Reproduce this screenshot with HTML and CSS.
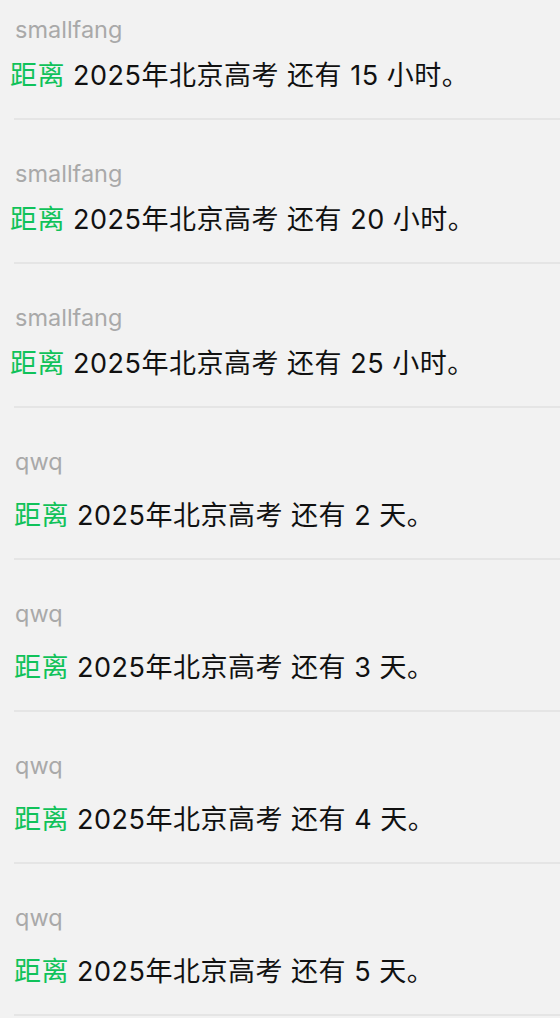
FILE: index.html
```html
<!DOCTYPE html>
<html lang="zh-CN">
<head>
    <meta charset="UTF-8">
    <meta name="viewport" content="width=device-width, initial-scale=1.0">
    <title>高考倒计时</title>
    <link rel="stylesheet" href="styles.css">
</head>
<body>
    <div class="feed">
        <div class="msg">
            <div class="user">smallfang</div>
            <div class="text"><span class="hl">距离</span> 2025年北京高考 还有 15 小时。</div>
        </div>
        <div class="msg">
            <div class="user">smallfang</div>
            <div class="text"><span class="hl">距离</span> 2025年北京高考 还有 20 小时。</div>
        </div>
        <div class="msg">
            <div class="user">smallfang</div>
            <div class="text"><span class="hl">距离</span> 2025年北京高考 还有 25 小时。</div>
        </div>
        <div class="msg msg-bot">
            <div class="user">qwq</div>
            <div class="text"><span class="hl">距离</span> 2025年北京高考 还有 2 天。</div>
        </div>
        <div class="msg msg-bot">
            <div class="user">qwq</div>
            <div class="text"><span class="hl">距离</span> 2025年北京高考 还有 3 天。</div>
        </div>
        <div class="msg msg-bot">
            <div class="user">qwq</div>
            <div class="text"><span class="hl">距离</span> 2025年北京高考 还有 4 天。</div>
        </div>
        <div class="msg msg-bot">
            <div class="user">qwq</div>
            <div class="text"><span class="hl">距离</span> 2025年北京高考 还有 5 天。</div>
        </div>
    </div>
</body>
</html>
```

FILE: styles.css
```css
:root {
    --bg-color: #f2f2f2;
    --line-color: #e5e5e5;
    --text-color: #111111;
    --muted-color: #a9a9a9;
    --accent-color: #10c25a;
}

body {
    margin: 0;
    background-color: var(--bg-color);
    font-family: Inter, "Noto Sans CJK SC", sans-serif;
    color: var(--text-color);
    overflow: hidden;
}

.feed {
    display: flex;
    flex-direction: column;
}

.msg {
    margin-left: 14px;
    padding: 40px 0 24px;
    border-bottom: 2px solid var(--line-color);
}

.msg:first-child {
    padding-top: 16px;
}

.user {
    font-size: 23.5px;
    line-height: 28px;
    color: var(--muted-color);
    padding-left: 1px;
}

.text {
    margin-top: 14px;
    margin-left: -4px;
    font-size: 27px;
    line-height: 36px;
    letter-spacing: 0.5px;
    white-space: nowrap;
}

.msg-bot .text {
    margin-top: 22px;
    margin-left: 0;
}

.hl {
    color: var(--accent-color);
}
```
